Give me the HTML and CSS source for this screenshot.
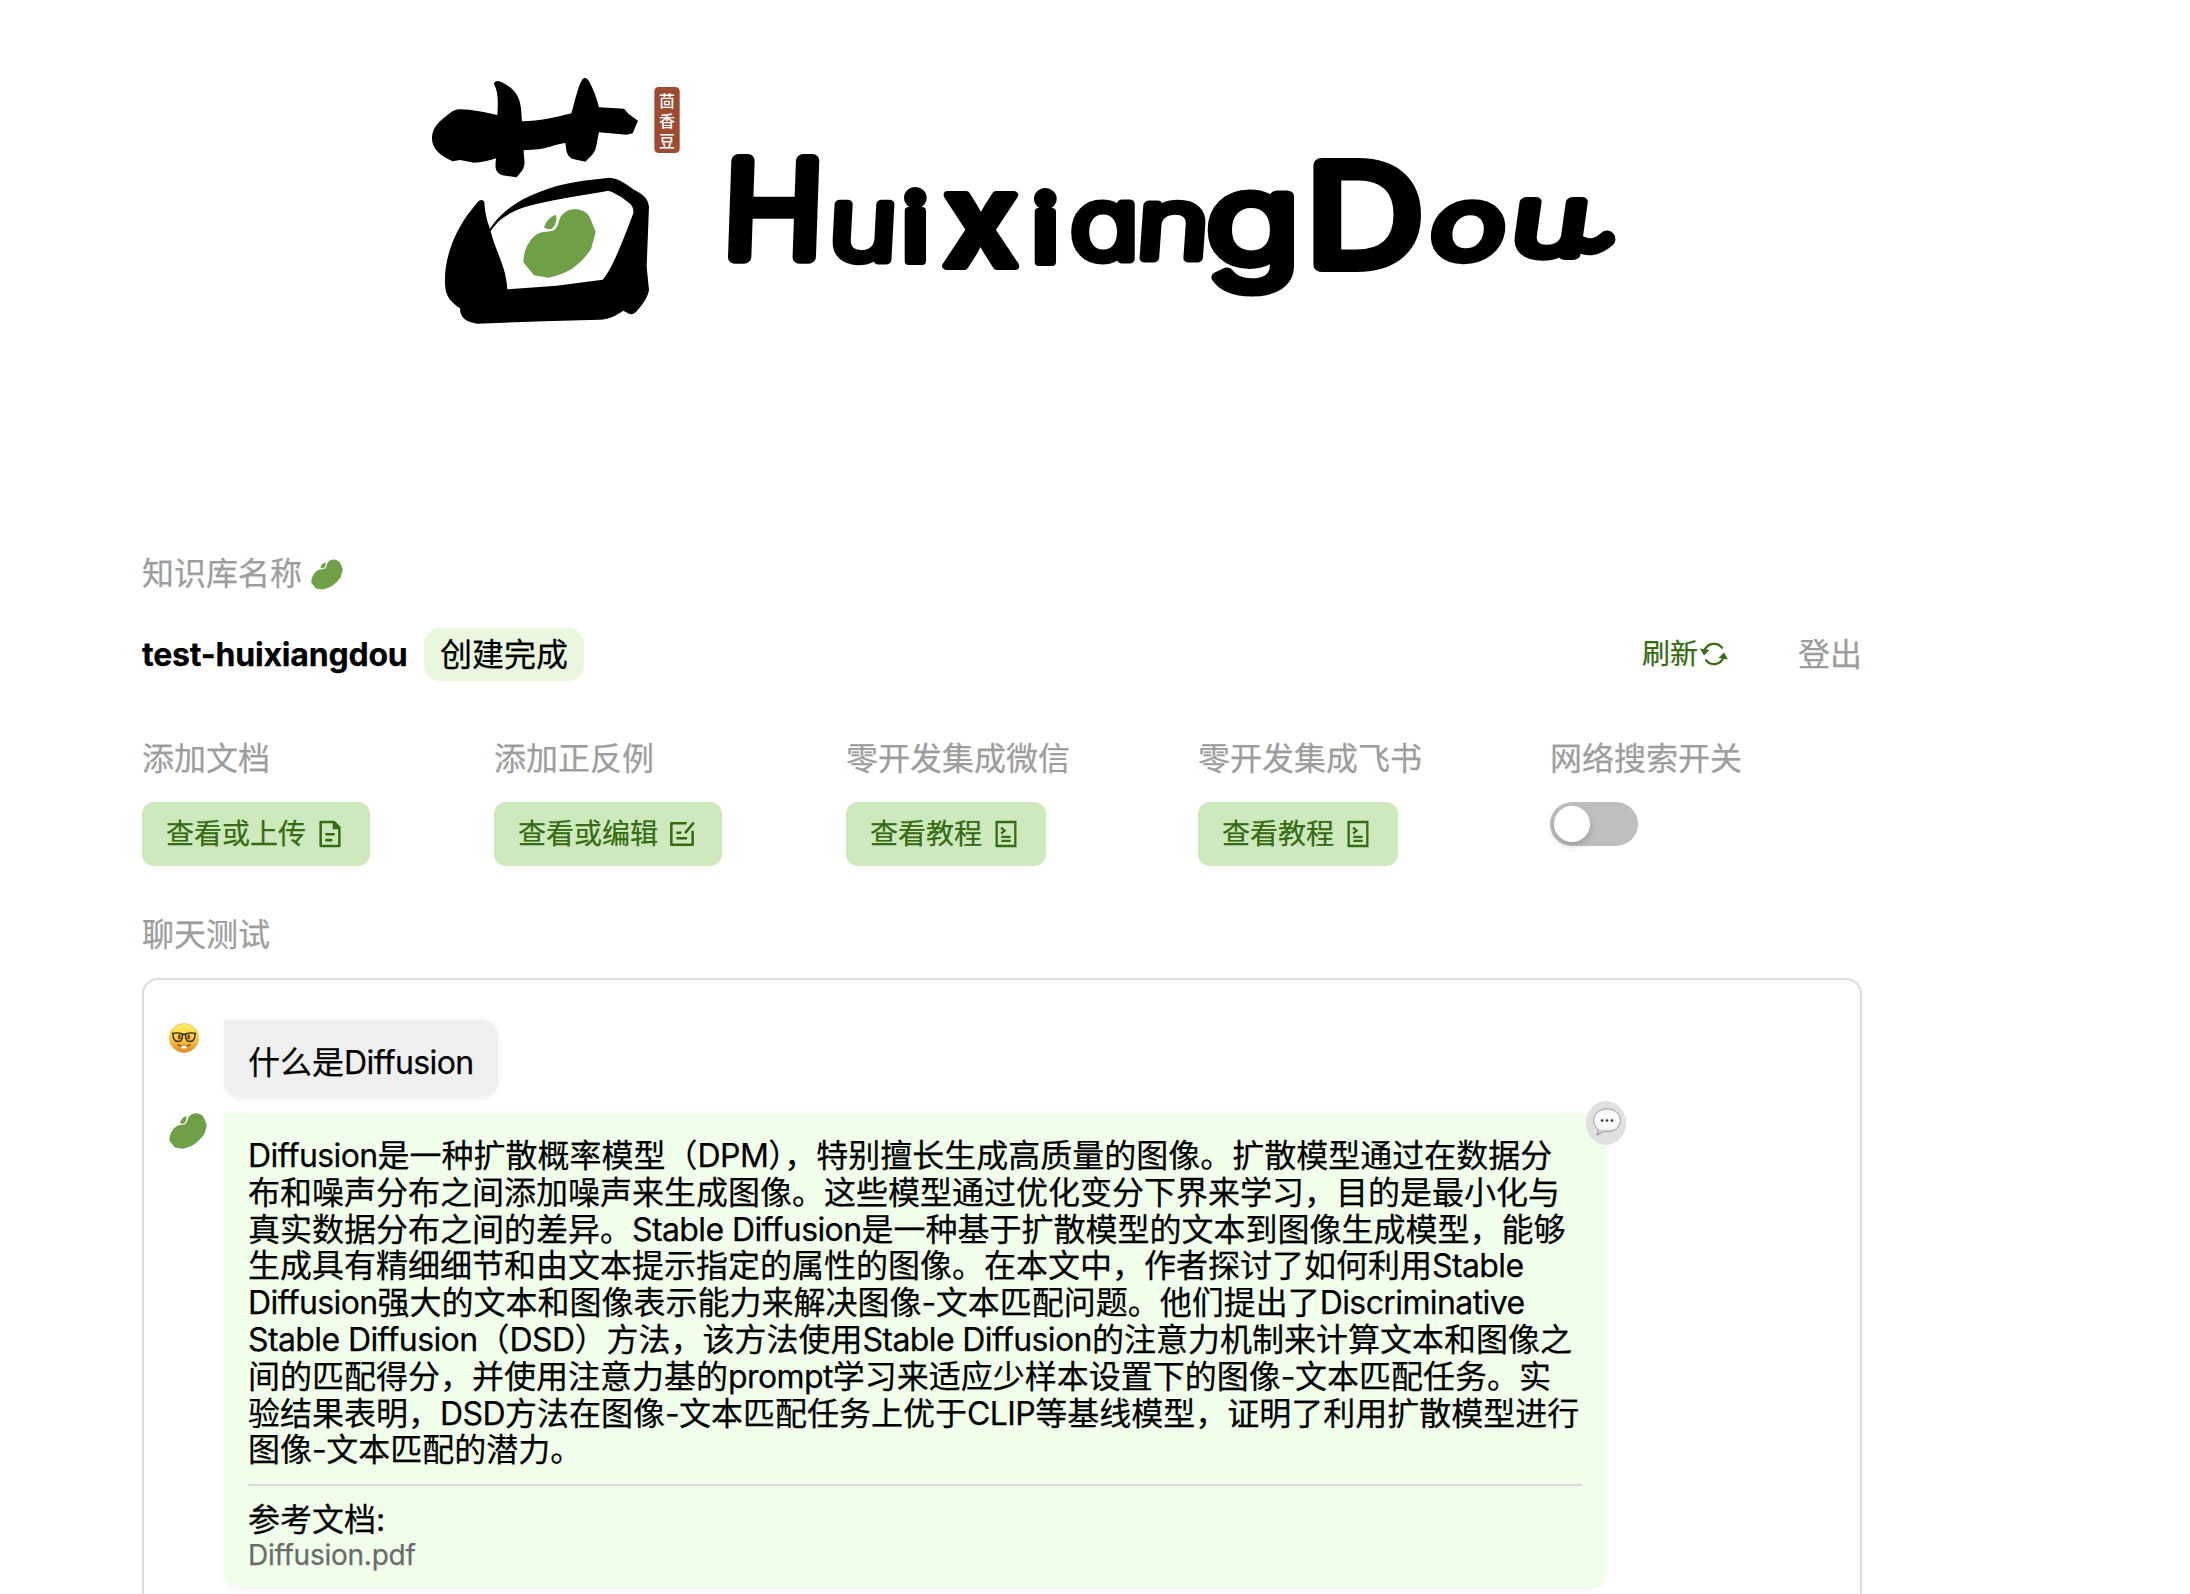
FILE: index.html
```html
<!DOCTYPE html>
<html lang="zh-CN">
<head>
<meta charset="utf-8">
<title>HuixiangDou</title>
<link rel="stylesheet" href="styles.css">
</head>
<body>
<svg class="sprite" aria-hidden="true">
  <symbol id="bean" viewBox="338 446 220 208">
    <path d="M340 607C341 572 356 538 382 522C396 514 412 516 426 513C444 507 444 489 450 474C462 452 482 446 502 448C522 450 538 462 545 485L557 516L543 568C528 590 506 612 485 627C465 639 440 648 416 653L372 646Z"/>
    <path d="M402 502C407 485 422 468 438 465C442 480 436 499 424 507C416 508 408 507 402 502Z"/>
  </symbol>
  <symbol id="tutorial" viewBox="0 0 24 24">
    <path d="M5 3h14v18H5zM8.300 7.200l2.700 2.300-2.700 2.300M8.500 14.100h7M8.500 17.200h7" fill="none" stroke="currentColor" stroke-width="1.700"/>
  </symbol>
</svg>

<main class="page">
  <header class="brand">
    <svg class="logo" viewBox="410 60 1230 280" role="img" aria-label="HuixiangDou">
      <g transform="translate(410 60) scale(.33333)">
        <path d="M66 232C68 205 84 188 104 172C120 160 130 148 148 148C190 148 225 158 262 165C264 130 266 98 252 72C252 64 262 61 272 65C300 78 322 96 330 128C335 148 334 166 336 184C390 184 435 172 484 160C494 128 502 84 516 60C522 52 530 52 536 62C550 86 560 114 567 142L642 146L656 162L684 182L668 220L650 224L567 217C560 240 562 272 545 286L526 305L486 296C466 284 470 268 466 249C440 252 415 264 385 268L341 271C340 290 350 314 336 332L320 352L278 346C252 338 256 318 258 295C235 302 215 308 192 308L150 300L128 304C92 288 64 266 66 232Z"/>
        <path fill-rule="evenodd" d="M206 423Q218 416 223 426C224 455 230 480 240 506C270 460 320 420 390 395C455 368 530 360 598 353C625 354 650 374 672 389C695 401 714 412 717 440L710 620L717 690C714 712 696 736 678 756Q670 764 660 763L640 752C615 768 595 779 570 779L400 784L200 791C168 785 150 774 150 745C122 726 106 710 105 670C102 600 130 530 162 480C176 458 192 440 206 423ZM242 514C256 575 288 615 292 688L440 677L578 659C605 630 640 540 670 460Q672 445 662 433L635 412L606 396Q595 391 580 395L480 412C390 430 285 440 242 514Z"/>
        <use href="#bean" x="338" y="446" width="220" height="208" class="leaf"/>
        <rect class="seal" x="733" y="81" width="76" height="198" rx="13"/>
        <text class="seal-text"><tspan x="747" y="140">茴</tspan><tspan x="747" y="202">香</tspan><tspan x="747" y="262">豆</tspan></text>
      </g>
      <g class="wordmark">
        <text transform="translate(722 257) skewX(-2) scale(1 .98)" font-size="135" stroke-width="14">H</text>
        <text transform="translate(827 260) skewX(-3) scale(1.15 1)" font-size="102" stroke-width="9">u</text>
        <text class="heavy" transform="translate(903 261)" font-size="91" stroke-width="8">i</text>
        <text class="medium" transform="translate(943 266) scale(1.02 1)" font-size="130" stroke-width="8">x</text>
        <text class="heavy" transform="translate(1033 262)" font-size="91" stroke-width="8">i</text>
        <text transform="translate(1070 259) scale(1.15 1)" font-size="100" stroke-width="9">a</text>
        <text transform="translate(1135 258) skewX(-4) scale(1.27 1)" font-size="97" stroke-width="9">n</text>
        <text transform="translate(1206 264) scale(1.26 1)" font-size="124" stroke-width="11">g</text>
        <text transform="translate(1306 265) scale(1.18 1)" font-size="138" stroke-width="14">D</text>
        <text transform="translate(1427 258) skewX(-8) scale(1.3 1)" font-size="97" stroke-width="10">o</text>
        <text transform="translate(1508 255) skewX(-8) scale(1.34 1)" font-size="97" stroke-width="10">u</text>
      </g>
      <path class="swash" d="M1574 240Q1590 254 1607 239"/>
    </svg>
  </header>

  <div class="label name-label">知识库名称<svg class="bean-small"><use href="#bean"/></svg></div>

  <div class="title-row">
    <strong class="name">test-huixiangdou</strong>
    <span class="state">创建完成</span>
    <a class="refresh">刷新<svg viewBox="0 0 28 28"><path d="M4.500 11A10 10 0 0 1 22.500 8.500M23.500 17A10 10 0 0 1 5.500 19.500" fill="none" stroke="currentColor" stroke-width="2.300"/><path d="M0 8.500L9.500 10L4 15.500ZM28 19.500L18.500 18L24 12.500Z" fill="currentColor"/></svg></a>
    <a class="logout">登出</a>
  </div>

  <section class="features">
    <div class="feature">
      <div class="label">添加文档</div>
      <button class="btn"><span>查看或上传</span><svg viewBox="0 0 24 24"><path d="M5 3h10l4 4v14H5zM8.500 12.200h7M8.500 16.600h5.200" fill="none" stroke="currentColor" stroke-width="1.900" stroke-linejoin="round"/><path d="M14 3v5.500h5.500z" fill="currentColor"/></svg></button>
    </div>
    <div class="feature">
      <div class="label">添加正反例</div>
      <button class="btn"><span>查看或编辑</span><svg viewBox="0 0 24 24"><path d="M15.500 4H4v16h16V9.500M20.800 3.500l-6.500 7.800M7.800 11h3.800M7.800 15.200h8" fill="none" stroke="currentColor" stroke-width="1.900" stroke-linejoin="round"/></svg></button>
    </div>
    <div class="feature">
      <div class="label">零开发集成微信</div>
      <button class="btn"><span>查看教程</span><svg><use href="#tutorial"/></svg></button>
    </div>
    <div class="feature">
      <div class="label">零开发集成飞书</div>
      <button class="btn"><span>查看教程</span><svg><use href="#tutorial"/></svg></button>
    </div>
    <div class="feature">
      <div class="label">网络搜索开关</div>
      <div class="switch"><span class="knob"></span></div>
    </div>
  </section>

  <div class="label chat-label">聊天测试</div>
  <section class="chat">
    <div class="message">
      <div class="avatar">
        <svg class="nerd" viewBox="0 0 30 30">
          <defs>
            <linearGradient id="face" x1="0" y1="0" x2="0" y2="1"><stop offset="0" stop-color="#fff06a"/><stop offset=".55" stop-color="#fbc638"/><stop offset="1" stop-color="#e8872a"/></linearGradient>
          </defs>
          <circle cx="15" cy="15" r="14.500" fill="url(#face)" stroke="#e59a3a" stroke-width=".6"/>
          <ellipse cx="10.300" cy="13.800" rx="1.500" ry="2.600" fill="#8a3f10"/>
          <ellipse cx="19.700" cy="13.800" rx="1.500" ry="2.600" fill="#8a3f10"/>
          <path d="M3 10.500Q9 9 13 11Q15 12 17 11Q21 9 27 10.500M4 11Q4 18.500 9 18.500Q13.500 18.500 13.500 11.500M26 11Q26 18.500 21 18.500Q16.500 18.500 16.500 11.500" fill="none" stroke="#2b2a1c" stroke-width="1.400"/>
          <path d="M8.500 21.500Q15 26 21.500 21.500" fill="none" stroke="#7c3f12" stroke-width="1.200"/>
          <path d="M12.300 23h5.400v2.300h-5.400z" fill="#fff"/>
        </svg>
      </div>
      <div class="bubble question">什么是<span class="latin">Diffusion</span></div>
    </div>
    <div class="message">
      <div class="avatar"><svg class="bean-avatar"><use href="#bean"/></svg></div>
      <div class="bubble answer">
        <p class="text"><span class="latin">Diffusion</span>是一种扩散概率模型（<span class="latin">DPM</span>），特别擅长生成高质量的图像。扩散模型通过在数据分<br>布和噪声分布之间添加噪声来生成图像。这些模型通过优化变分下界来学习，目的是最小化与<br>真实数据分布之间的差异。<span class="latin">Stable Diffusion</span>是一种基于扩散模型的文本到图像生成模型，能够<br>生成具有精细细节和由文本提示指定的属性的图像。在本文中，作者探讨了如何利用<span class="latin">Stable</span><br><span class="latin">Diffusion</span>强大的文本和图像表示能力来解决图像<span class="latin">-</span>文本匹配问题。他们提出了<span class="latin">Discriminative</span><br><span class="latin">Stable Diffusion</span>（<span class="latin">DSD</span>）方法，该方法使用<span class="latin">Stable Diffusion</span>的注意力机制来计算文本和图像之<br>间的匹配得分，并使用注意力基的<span class="latin">prompt</span>学习来适应少样本设置下的图像<span class="latin">-</span>文本匹配任务。实<br>验结果表明，<span class="latin">DSD</span>方法在图像<span class="latin">-</span>文本匹配任务上优于<span class="latin">CLIP</span>等基线模型，证明了利用扩散模型进行<br>图像<span class="latin">-</span>文本匹配的潜力。</p>
        <div class="refs">
          <div>参考文档:</div>
          <div class="file">Diffusion.pdf</div>
        </div>
        <div class="comment">
          <svg viewBox="0 0 28 28">
            <defs><linearGradient id="talk" x1="0" y1="0" x2="0" y2="1"><stop offset="0" stop-color="#eee"/><stop offset=".3" stop-color="#fff"/><stop offset=".75" stop-color="#f6f6f6"/><stop offset="1" stop-color="#aaa"/></linearGradient></defs>
            <path d="M14 .8C21.500 .8 27.300 5.500 27.300 12.300S21.500 23.700 14 23.700Q12 23.700 10.500 23.300Q7.500 26.500 3.500 27Q5.500 25 5.300 21.500Q.7 18 .7 12.300C.7 5.500 6.500 .8 14 .8Z" fill="url(#talk)" stroke="#999" stroke-width="1"/>
            <g fill="#333"><circle cx="9" cy="12.500" r="1.300"/><circle cx="14" cy="12.500" r="1.300"/><circle cx="19" cy="12.500" r="1.300"/></g>
          </svg>
        </div>
      </div>
    </div>
  </section>
</main>
</body>
</html>
```
FILE: styles.css
```css
* { box-sizing: border-box; }
body {
  margin: 0;
  background: #fff;
  color: #000;
  font-family: Inter, "Noto Sans CJK SC", sans-serif;
  font-size: 32px;
  line-height: 36.8px;
  -webkit-text-stroke: 0.25px currentColor;
  overflow: hidden;
}
.sprite { position: absolute; width: 0; height: 0; }
.page {
  width: 1720px;
  height: 1594px;
  margin-left: 142px;
  display: flex;
  flex-direction: column;
}
.brand { height: 555px; padding: 60px 0 0 268px; flex: none; }
.logo { display: block; width: 1230px; height: 280px; }
.leaf, .bean-small, .bean-avatar { fill: #6f9f46; }
.seal { fill: #9c4a30; }
.seal-text { font-family: "Noto Sans CJK SC", sans-serif; font-size: 48px; font-weight: 500; fill: #fff; -webkit-text-stroke: 0; }
.wordmark {
  font-family: Inter, sans-serif;
  font-weight: 300;
  -webkit-text-stroke: initial;
  stroke: #000;
  stroke-linejoin: round;
  font-feature-settings: "cv11";
}
.medium { font-weight: 600; }
.heavy { font-weight: 700; }
.swash { fill: none; stroke: #000; stroke-width: 17; stroke-linecap: round; }

.label { color: #9d9d9d; height: 37px; padding-top: 1px; white-space: nowrap; flex: none; }
.name-label { display: flex; align-items: center; gap: 9px; }
.bean-small { width: 32px; height: 31px; }

.title-row { display: flex; align-items: center; height: 53px; margin-top: 36px; flex: none; }
.name { letter-spacing: -0.2px; font-weight: 700; width: 282px; white-space: nowrap; padding-top: 1px; }
.state { background: #e8f7de; border-radius: 16px; padding: 9px 16px 7px; height: 53px; }
.refresh {
  display: flex;
  align-items: center;
  gap: 2px;
  margin-left: auto;
  color: #366b12;
  font-size: 28px;
}
.refresh svg { width: 28px; height: 28px; }
.logout { color: #9d9d9d; margin-left: 70px; padding-top: 1px; }

.features { display: grid; grid-template-columns: repeat(5, 352px); margin-top: 59px; height: 126px; flex: none; }
.feature { display: flex; flex-direction: column; align-items: flex-start; gap: 25px; }
.btn {
  display: flex;
  align-items: center;
  gap: 8px;
  height: 64px;
  padding: 0 24px;
  border: 0;
  border-radius: 12px;
  background: #cee9be;
  color: #366b12;
  font: inherit;
  font-size: 28px;
  white-space: nowrap;
}
.btn span { padding-top: 1px; }
.btn svg { width: 32px; height: 32px; }
.switch { width: 88px; height: 44px; padding: 4px; border-radius: 22px; background: #bfbfbf; }
.knob { display: block; width: 36px; height: 36px; border-radius: 50%; background: #fff; box-shadow: 0 4px 8px rgba(0, 35, 11, .2); }

.chat-label { margin-top: 50px; }
.chat {
  flex: 1;
  margin-top: 25px;
  padding: 40px 25px 0;
  border: 2px solid #dcdcdc;
  border-bottom: 0;
  border-radius: 16px 16px 0 0;
}
.message { display: flex; align-items: flex-start; margin-bottom: 16px; }
.avatar { width: 55px; flex: none; }
.avatar svg { display: block; }
.nerd { width: 30px; height: 30px; margin-top: 3px; }
.bean-avatar { width: 38px; height: 36px; }
.bubble { border-radius: 0 16px 16px 16px; padding: 25px 24px 15px; white-space: nowrap; box-shadow: 0 2px 6px rgba(0, 0, 0, .06); }
.question { background: #efefef; height: 77px; }
.answer { position: relative; width: 1382px; height: 474px; background: #efffea; }
.latin { letter-spacing: -0.6px; }
.text { margin: 0; height: 346px; }
.refs { border-top: 2px solid #dadadc; padding-top: 16px; }
.file { color: #6b6b6b; font-size: 28px; line-height: 32px; letter-spacing: -0.25px; }
.comment {
  position: absolute;
  top: -12px;
  right: -20px;
  width: 40px;
  height: 44px;
  border-radius: 50%;
  background: #e0e0e0;
  padding: 7px 6px 0 7px;
}
.comment svg { display: block; width: 28px; height: 28px; }
```
